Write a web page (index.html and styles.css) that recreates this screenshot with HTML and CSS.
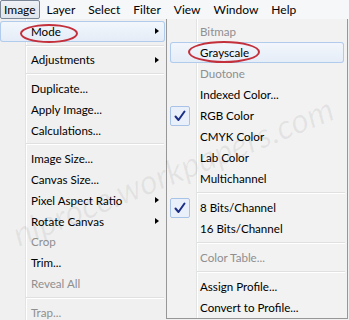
FILE: index.html
```html
<!DOCTYPE html>
<html>
<head>
<meta charset="utf-8">
<link rel="stylesheet" href="styles.css">
</head>
<body>
<div class="menubar">
  <span class="mb-item active">Image</span>
  <span class="mb-item">Layer</span>
  <span class="mb-item">Select</span>
  <span class="mb-item">Filter</span>
  <span class="mb-item">View</span>
  <span class="mb-item">Window</span>
  <span class="mb-item">Help</span>
</div>
<div class="menus">
  <div class="menu main">
    <div class="row hl"><span>Mode</span><i class="arrow"></i></div>
    <div class="sep"></div>
    <div class="row"><span>Adjustments</span><i class="arrow"></i></div>
    <div class="sep"></div>
    <div class="row"><span>Duplicate...</span></div>
    <div class="row"><span>Apply Image...</span></div>
    <div class="row"><span>Calculations...</span></div>
    <div class="sep"></div>
    <div class="row"><span>Image Size...</span></div>
    <div class="row"><span>Canvas Size...</span></div>
    <div class="row"><span>Pixel Aspect Ratio</span><i class="arrow"></i></div>
    <div class="row"><span>Rotate Canvas</span><i class="arrow"></i></div>
    <div class="row dis"><span>Crop</span></div>
    <div class="row"><span>Trim...</span></div>
    <div class="row dis"><span>Reveal All</span></div>
    <div class="sep"></div>
    <div class="row dis"><span>Trap...</span></div>
  </div>
  <div class="menu sub">
    <div class="row dis"><i class="ico"></i><span>Bitmap</span></div>
    <div class="row hl"><i class="ico"></i><span>Grayscale</span></div>
    <div class="row dis"><i class="ico"></i><span>Duotone</span></div>
    <div class="row"><i class="ico"></i><span>Indexed Color...</span></div>
    <div class="row"><i class="ico check"><svg width="20" height="20" viewBox="0 0 20 20"><path d="M5.5 10.5 L8.5 14 L14.5 5.5" fill="none" stroke="#1c2f86" stroke-width="2" stroke-linecap="round" stroke-linejoin="round"/></svg></i><span>RGB Color</span></div>
    <div class="row"><i class="ico"></i><span>CMYK Color</span></div>
    <div class="row"><i class="ico"></i><span>Lab Color</span></div>
    <div class="row"><i class="ico"></i><span>Multichannel</span></div>
    <div class="sep"></div>
    <div class="row"><i class="ico check"><svg width="20" height="20" viewBox="0 0 20 20"><path d="M5.5 10.5 L8.5 14 L14.5 5.5" fill="none" stroke="#1c2f86" stroke-width="2" stroke-linecap="round" stroke-linejoin="round"/></svg></i><span>8 Bits/Channel</span></div>
    <div class="row"><i class="ico"></i><span>16 Bits/Channel</span></div>
    <div class="sep"></div>
    <div class="row dis"><i class="ico"></i><span>Color Table...</span></div>
    <div class="sep"></div>
    <div class="row"><i class="ico"></i><span>Assign Profile...</span></div>
    <div class="row"><i class="ico"></i><span>Convert to Profile...</span></div>
  </div>
</div>
<div class="ring ring-mode"></div>
<div class="ring ring-gray"></div>
<div class="watermark">nlproce.workpapers.com</div>
</body>
</html>
```
FILE: styles.css
```css
html, body {
  margin: 0;
  padding: 0;
}
body {
  width: 349px;
  height: 320px;
  overflow: hidden;
  position: relative;
  background: #f0f0f0;
  font-family: "Lato", "Noto Sans", sans-serif;
  font-size: 11.6px;
  color: #000;
}
.menubar {
  height: 19px;
  display: flex;
  align-items: center;
  background: #f6f7f8;
  font-size: 12px;
}
.mb-item {
  height: 19px;
  box-sizing: border-box;
  display: flex;
  align-items: center;
  padding: 0 6px 0 7px;
}
.mb-item.active {
  background: linear-gradient(#eef1f5, #dfe5ec);
  border: 1px solid #7b8797;
  border-radius: 2px;
  padding: 0 3px 0 3px;
}
.menus {
  display: flex;
  align-items: flex-start;
}
.menu {
  box-sizing: border-box;
  padding-top: 2px;
}
.main {
  width: 166px;
  height: 310px;
  background: linear-gradient(to right, transparent 25px, #e2e3e3 25px, #e2e3e3 26px, #ffffff 26px, #ffffff 27px, transparent 27px), #f0f0f0;
}
.sub {
  width: 182px;
  height: 300px;
  background: linear-gradient(to right, transparent 29px, #e2e3e3 29px, #e2e3e3 30px, #ffffff 30px, #ffffff 31px, transparent 31px), #f2f2f2;
  border-left: 1px solid #979797;
  border-bottom: 1px solid #979797;
  border-right: 1px solid #979797;
}
.row {
  height: 21px;
  display: flex;
  align-items: center;
  box-sizing: border-box;
  white-space: nowrap;
}
.main .row {
  height: 20.8px;
  padding-left: 31px;
  padding-right: 6px;
  margin-right: 1px;
}
.sub .row {
  padding-left: 3px;
  margin: 0 3px 0 0;
}
.row.dis {
  color: #8f8f8f;
}
.row.hl {
  background: linear-gradient(#f3f7fc, #e4ecf7);
  box-shadow: inset 0 0 0 1px #b0cbec;
  border-radius: 3px;
}
.sub .row.hl {
  margin-left: 3px;
  padding-left: 0;
}
.arrow {
  margin-left: auto;
  width: 0;
  height: 0;
  border-top: 3.5px solid transparent;
  border-bottom: 3.5px solid transparent;
  border-left: 4px solid #000;
}
.ico {
  width: 20px;
  height: 20px;
  margin-right: 10px;
  flex: none;
  box-sizing: border-box;
}
.ico.check {
  background: #e9f0fa;
  border: 1px solid #a9c3e6;
  border-radius: 2px;
  display: flex;
  align-items: center;
  justify-content: center;
}
.ico.check svg {
  flex: none;
}
.sep {
  height: 8px;
  display: flex;
  align-items: center;
}
.main .sep {
  height: 7.8px;
  margin-left: 26px;
  margin-right: 2px;
}
.sub .sep {
  margin-left: 30px;
  margin-right: 2px;
}
.sep::before {
  content: "";
  flex: 1;
  border-top: 1px solid #e0e0e0;
  border-bottom: 1px solid #ffffff;
}
.ring {
  position: absolute;
  border: 2px solid #c3303b;
  border-radius: 50%;
  box-sizing: border-box;
}
.ring-mode {
  left: 20px;
  top: 24px;
  width: 58px;
  height: 19px;
}
.ring-gray {
  left: 188px;
  top: 41px;
  width: 72px;
  height: 22px;
}
.watermark {
  position: absolute;
  left: 14px;
  top: 212px;
  font-family: "Lato", sans-serif;
  font-style: italic;
  font-size: 34px;
  line-height: 46px;
  color: rgba(0, 0, 0, 0.06);
  transform: rotate(-22deg);
  transform-origin: left center;
  white-space: nowrap;
  pointer-events: none;
}
```
